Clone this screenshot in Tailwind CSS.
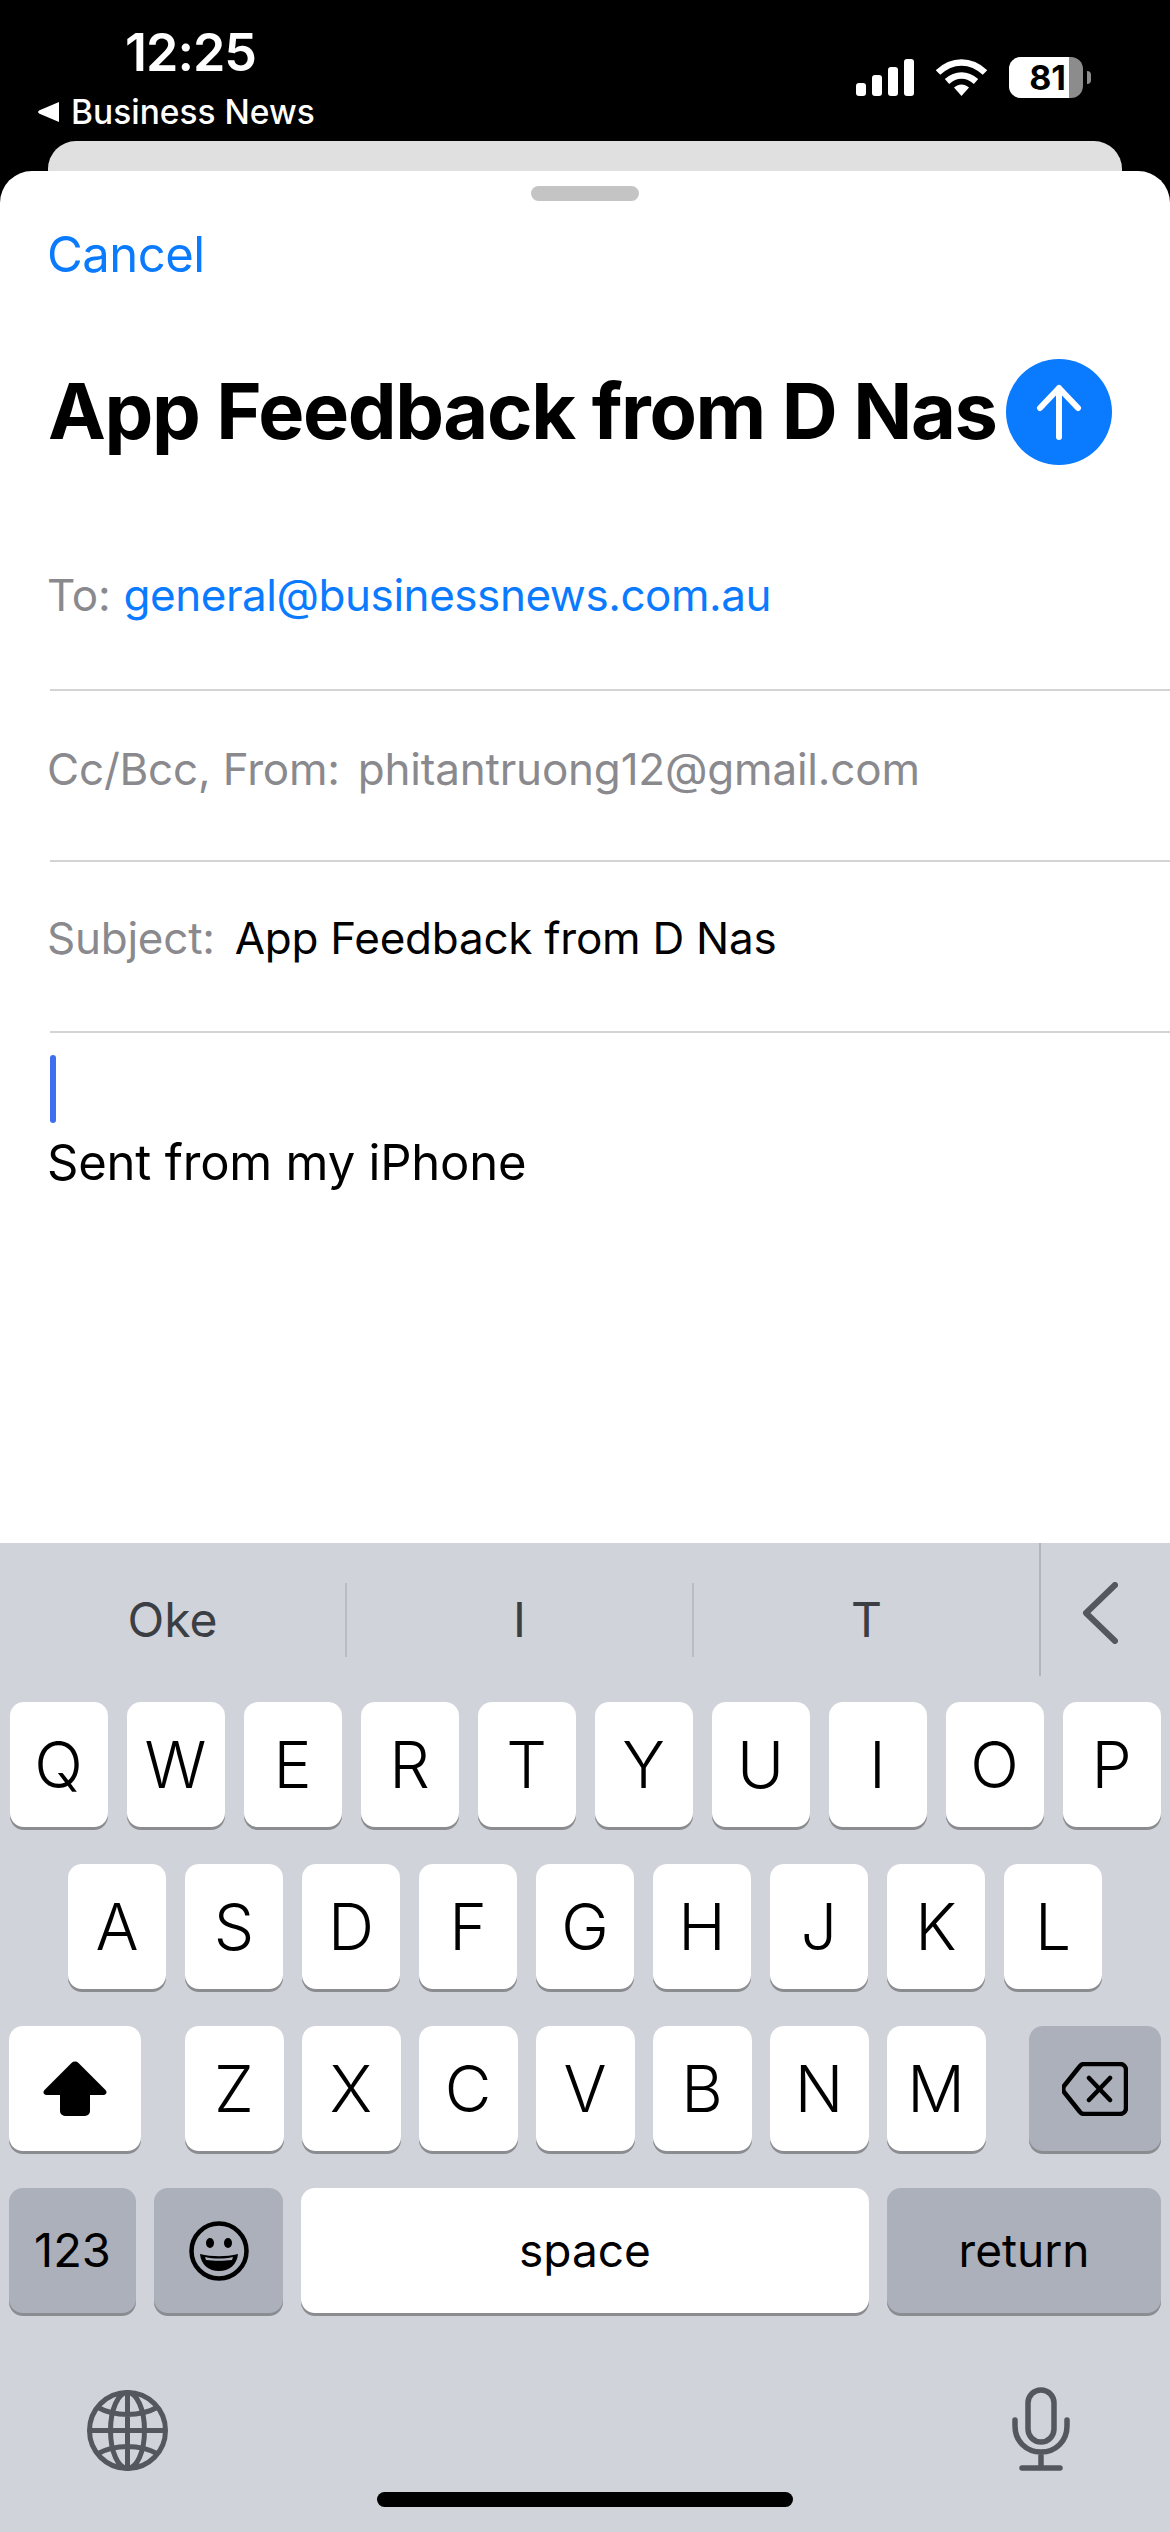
<!DOCTYPE html>
<html lang="en">
  <head>
    <meta charset="UTF-8" />
    <title>New Message</title>
    <script src="https://cdn.jsdelivr.net/npm/@tailwindcss/browser@4"></script>
  </head>
  <body class="bg-black">
    <div class="w-[1170px] h-[2532px] flex flex-col overflow-hidden bg-black font-['Inter','Liberation_Sans',sans-serif] text-black">
      <!-- status bar -->
      <header class="h-[141px] shrink-0 flex justify-between text-white">
        <div class="flex flex-col">
          <div class="pl-[125px] pt-[24px] text-[52px] leading-[58px] font-semibold tracking-[-1px]">12:25</div>
          <div class="pl-[38px] pt-[10px] flex items-center gap-[12px]">
            <svg width="21" height="20" viewBox="0 0 21 20"><path d="M21 0v20L1 11.5a2 2 0 0 1 0-3z" fill="#fff" /></svg>
            <span class="text-[33.500px] leading-[40px] font-medium">Business News</span>
          </div>
        </div>
        <div class="pt-[57px] pr-[79px] flex items-start">
          <svg class="mt-[2px]" width="58" height="37" viewBox="0 0 58 37" fill="#fff">
            <rect x="0" y="24" width="10" height="13" rx="3" />
            <rect x="16" y="16" width="10" height="21" rx="3" />
            <rect x="32" y="8" width="10" height="29" rx="3" />
            <rect x="48" y="0" width="10" height="37" rx="3" />
          </svg>
          <svg class="ml-[22px] mt-[2px]" width="51" height="37" viewBox="0 0 51 37">
            <path d="M2 13.500C16 0 35 0 49 13.500" fill="none" stroke="#fff" stroke-width="6.500" />
            <path d="M11 22.500c9-8 20-8 29 0" fill="none" stroke="#fff" stroke-width="6.500" />
            <path d="M18 28.500c5-4 10-4 15 0L25.500 37z" fill="#fff" />
          </svg>
          <div class="ml-[22px] w-[74px] h-[41px] rounded-[12px] overflow-hidden flex bg-[#8c8c8c]">
            <div class="w-[60px] bg-white flex items-center justify-end pr-[3px] text-black text-[34px] leading-none font-bold">81</div>
          </div>
          <div class="ml-[4px] mt-[14px] w-[4px] h-[13px] rounded-r-full bg-[#8c8c8c]"></div>
        </div>
      </header>

      <div class="h-[30px] shrink-0 mx-[48px] bg-[#e0e0e0] rounded-t-[28px]"></div>

      <!-- compose sheet -->
      <main class="h-[1372px] shrink-0 bg-white rounded-t-[32px] flex flex-col">
        <div class="pt-[15px] flex justify-center">
          <div class="w-[108px] h-[15px] rounded-full bg-[#c4c4c4]"></div>
        </div>
        <div class="h-[78px] pl-[47px] pt-[24px] text-[49px] leading-[60px] text-[#0a7aff] tracking-[-0.5px]">Cancel</div>
        <div class="h-[266px] pl-[48px] pr-[58px] flex items-center justify-between">
          <h1 class="text-[77.500px] font-bold tracking-[-1.400px] leading-none whitespace-nowrap">App Feedback from D Nas</h1>
          <div class="w-[106px] h-[106px] shrink-0 rounded-full bg-[#0a7aff] flex items-center justify-center">
            <svg width="46" height="56" viewBox="0 0 46 56" fill="none" stroke="#fff" stroke-width="6" stroke-linecap="round" stroke-linejoin="round"><path d="M23 53V4M4 24 23 4l19 20" /></svg>
          </div>
        </div>
        <div class="ml-[50px] h-[146px] pb-[67px] flex items-end gap-[13px] border-b-2 border-[#d4d4d6] text-[44px] leading-[54px] tracking-[-0.2px]">
          <span class="-ml-[3px] text-[#8a8a8e]">To:</span>
          <span class="text-[#0a7aff] tracking-[-0.450px]">general@businessnews.com.au</span>
        </div>
        <div class="ml-[50px] h-[171px] pb-[14px] flex items-center gap-[18px] border-b-2 border-[#d4d4d6] text-[44px] tracking-[-0.2px] text-[#8a8a8e]">
          <span class="-ml-[3px]">Cc/Bcc, From:</span>
          <span>phitantruong12@gmail.com</span>
        </div>
        <div class="ml-[50px] h-[171px] pb-[18px] flex items-center gap-[20px] border-b-2 border-[#d4d4d6] text-[44px] tracking-[-0.250px]">
          <span class="-ml-[3px] text-[#8a8a8e]">Subject:</span>
          <span>App Feedback from D Nas</span>
        </div>
        <div class="pl-[50px] pt-[22px]">
          <div class="w-[6px] h-[68px] rounded-full bg-[#3f6ff0]"></div>
          <p class="-ml-[3px] pt-[10px] text-[49px] leading-[60px] tracking-[-0.2px]">Sent from my iPhone</p>
        </div>
      </main>

      <!-- keyboard -->
      <section class="flex-1 bg-[#d0d3da] flex flex-col">
        <div class="h-[133px] shrink-0 flex text-[48px] text-[#3b3e43]">
          <div class="w-[1039px] flex items-center pt-[20px]">
            <div class="flex-1 flex justify-center">Oke</div>
            <div class="w-[2px] h-[74px] bg-[#b9bcc3]"></div>
            <div class="flex-1 flex justify-center">I</div>
            <div class="w-[2px] h-[74px] bg-[#b9bcc3]"></div>
            <div class="flex-1 flex justify-center">T</div>
          </div>
          <div class="w-[2px] bg-[#b2b5bc]"></div>
          <div class="pl-[41px] pt-[39px]">
            <svg width="36" height="62" viewBox="0 0 36 62" fill="none" stroke="#54575d" stroke-width="6" stroke-linecap="round" stroke-linejoin="round"><path d="M33 3 4 31l29 28" /></svg>
          </div>
        </div>

        <div class="mt-[26px] flex flex-col gap-[37px] text-[64px] font-[350]">
          <div class="flex justify-center gap-[19px]">
            <div class="w-[98px] h-[125px] rounded-[14px] bg-white shadow-[0_3px_0_#8b8c90] flex items-center justify-center">Q</div>
            <div class="w-[98px] h-[125px] rounded-[14px] bg-white shadow-[0_3px_0_#8b8c90] flex items-center justify-center">W</div>
            <div class="w-[98px] h-[125px] rounded-[14px] bg-white shadow-[0_3px_0_#8b8c90] flex items-center justify-center">E</div>
            <div class="w-[98px] h-[125px] rounded-[14px] bg-white shadow-[0_3px_0_#8b8c90] flex items-center justify-center">R</div>
            <div class="w-[98px] h-[125px] rounded-[14px] bg-white shadow-[0_3px_0_#8b8c90] flex items-center justify-center">T</div>
            <div class="w-[98px] h-[125px] rounded-[14px] bg-white shadow-[0_3px_0_#8b8c90] flex items-center justify-center">Y</div>
            <div class="w-[98px] h-[125px] rounded-[14px] bg-white shadow-[0_3px_0_#8b8c90] flex items-center justify-center">U</div>
            <div class="w-[98px] h-[125px] rounded-[14px] bg-white shadow-[0_3px_0_#8b8c90] flex items-center justify-center">I</div>
            <div class="w-[98px] h-[125px] rounded-[14px] bg-white shadow-[0_3px_0_#8b8c90] flex items-center justify-center">O</div>
            <div class="w-[98px] h-[125px] rounded-[14px] bg-white shadow-[0_3px_0_#8b8c90] flex items-center justify-center">P</div>
          </div>
          <div class="flex justify-center gap-[19px]">
            <div class="w-[98px] h-[125px] rounded-[14px] bg-white shadow-[0_3px_0_#8b8c90] flex items-center justify-center">A</div>
            <div class="w-[98px] h-[125px] rounded-[14px] bg-white shadow-[0_3px_0_#8b8c90] flex items-center justify-center">S</div>
            <div class="w-[98px] h-[125px] rounded-[14px] bg-white shadow-[0_3px_0_#8b8c90] flex items-center justify-center">D</div>
            <div class="w-[98px] h-[125px] rounded-[14px] bg-white shadow-[0_3px_0_#8b8c90] flex items-center justify-center">F</div>
            <div class="w-[98px] h-[125px] rounded-[14px] bg-white shadow-[0_3px_0_#8b8c90] flex items-center justify-center">G</div>
            <div class="w-[98px] h-[125px] rounded-[14px] bg-white shadow-[0_3px_0_#8b8c90] flex items-center justify-center">H</div>
            <div class="w-[98px] h-[125px] rounded-[14px] bg-white shadow-[0_3px_0_#8b8c90] flex items-center justify-center">J</div>
            <div class="w-[98px] h-[125px] rounded-[14px] bg-white shadow-[0_3px_0_#8b8c90] flex items-center justify-center">K</div>
            <div class="w-[98px] h-[125px] rounded-[14px] bg-white shadow-[0_3px_0_#8b8c90] flex items-center justify-center">L</div>
          </div>
          <div class="flex px-[9px] justify-between">
            <div class="w-[132px] h-[125px] rounded-[14px] bg-white shadow-[0_3px_0_#8b8c90] flex items-center justify-center">
              <svg width="64" height="56" viewBox="0 0 64 56"><path d="M28.500 2a5 5 0 0 1 7 0l27 27c2 2 1 5-2 5H47v16a5 5 0 0 1-5 5H22a5 5 0 0 1-5-5V34H3.500c-3 0-4-3-2-5z" fill="#000" /></svg>
            </div>
            <div class="flex gap-[18px]">
              <div class="w-[99px] h-[125px] rounded-[14px] bg-white shadow-[0_3px_0_#8b8c90] flex items-center justify-center">Z</div>
              <div class="w-[99px] h-[125px] rounded-[14px] bg-white shadow-[0_3px_0_#8b8c90] flex items-center justify-center">X</div>
              <div class="w-[99px] h-[125px] rounded-[14px] bg-white shadow-[0_3px_0_#8b8c90] flex items-center justify-center">C</div>
              <div class="w-[99px] h-[125px] rounded-[14px] bg-white shadow-[0_3px_0_#8b8c90] flex items-center justify-center">V</div>
              <div class="w-[99px] h-[125px] rounded-[14px] bg-white shadow-[0_3px_0_#8b8c90] flex items-center justify-center">B</div>
              <div class="w-[99px] h-[125px] rounded-[14px] bg-white shadow-[0_3px_0_#8b8c90] flex items-center justify-center">N</div>
              <div class="w-[99px] h-[125px] rounded-[14px] bg-white shadow-[0_3px_0_#8b8c90] flex items-center justify-center">M</div>
            </div>
            <div class="w-[132px] h-[125px] rounded-[14px] bg-[#abb0bb] shadow-[0_3px_0_#8b8c90] flex items-center justify-center">
              <svg width="66" height="54" viewBox="0 0 66 54" fill="none" stroke="#000" stroke-width="4.500" stroke-linecap="round" stroke-linejoin="round"><path d="M22 2h36a6 6 0 0 1 6 6v38a6 6 0 0 1-6 6H22a5 5 0 0 1-4-2L2 30c-1-2-1-4 0-6L18 4a5 5 0 0 1 4-2zM27 16l21 22M48 16 27 38" /></svg>
            </div>
          </div>
          <div class="flex px-[9px] gap-[18px] text-[46px] font-normal">
            <div class="w-[127px] h-[125px] rounded-[14px] bg-[#abb0bb] shadow-[0_3px_0_#8b8c90] flex items-center justify-center text-[47px]">123</div>
            <div class="w-[129px] h-[125px] rounded-[14px] bg-[#abb0bb] shadow-[0_3px_0_#8b8c90] flex items-center justify-center">
              <svg width="60" height="60" viewBox="0 0 60 60">
                <circle cx="30" cy="30" r="27.500" fill="none" stroke="#000" stroke-width="4.500" />
                <ellipse cx="21" cy="22" rx="4" ry="5" fill="#000" />
                <ellipse cx="39" cy="22" rx="4" ry="5" fill="#000" />
                <path d="M11 33c12 3 26 3 38 0-1 11-9 17-19 17s-18-6-19-17z" fill="#000" />
                <path d="M16 36c9 2 19 2 28 0l-1 3c-8 1-18 1-26 0z" fill="#abb0bb" />
              </svg>
            </div>
            <div class="w-[568px] h-[125px] rounded-[14px] bg-white shadow-[0_3px_0_#8b8c90] flex items-center justify-center">space</div>
            <div class="w-[274px] h-[125px] rounded-[14px] bg-[#abb0bb] shadow-[0_3px_0_#8b8c90] flex items-center justify-center">return</div>
          </div>
        </div>

        <div class="mt-[73px] pl-[87px] pr-[100px] flex justify-between items-start">
          <svg class="mt-[4px]" width="81" height="81" viewBox="0 0 81 81" fill="none" stroke="#54575d" stroke-width="5">
            <circle cx="40.500" cy="40.500" r="38" />
            <ellipse cx="40.500" cy="40.500" rx="17" ry="38" />
            <path d="M40.500 2.500v76M2.500 40.500h76M10 17c18 10 43 10 61 0M10 64c18-10 43-10 61 0" />
          </svg>
          <svg class="mt-[1px]" width="58" height="84" viewBox="0 0 58 84" fill="none" stroke="#54575d" stroke-width="5.500" stroke-linecap="round">
            <rect x="16" y="3" width="26" height="52" rx="13" />
            <path d="M3 33v6c0 15 11 26 26 26s26-11 26-26v-6M29 65v15M10 81h38" />
          </svg>
        </div>

        <div class="mt-[21px] flex justify-center">
          <div class="w-[416px] h-[15px] rounded-full bg-black"></div>
        </div>
      </section>
    </div>
  </body>
</html>
